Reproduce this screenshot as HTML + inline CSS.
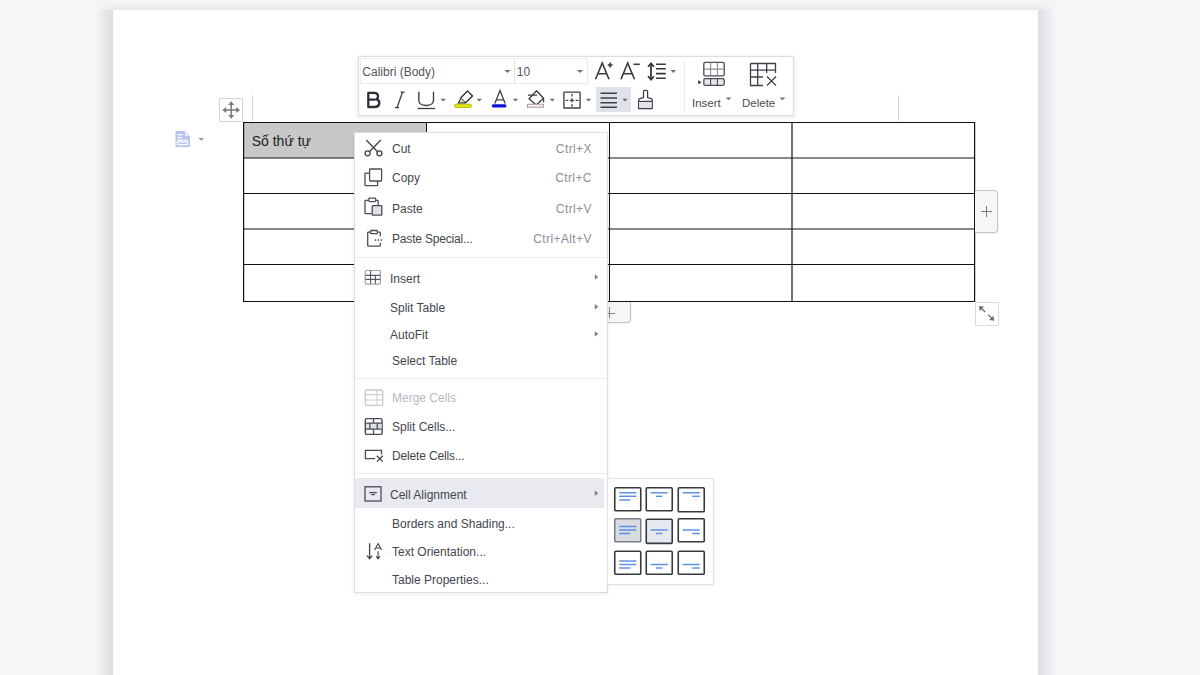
<!DOCTYPE html>
<html><head><meta charset="utf-8">
<style>
html,body{margin:0;padding:0;}
body{width:1200px;height:675px;overflow:hidden;background:#f5f6f8;position:relative;font-family:"Liberation Sans",sans-serif;}
.abs{position:absolute;}
#page{position:absolute;left:113px;top:10px;width:925px;height:700px;background:#fff;}
.t{position:absolute;white-space:nowrap;font-size:12px;line-height:14px;color:#43464d;}
.sc{position:absolute;white-space:nowrap;font-size:12px;line-height:14px;color:#8d9096;text-align:right;letter-spacing:0.4px;}
svg{position:absolute;overflow:visible;}
</style></head><body>
<div class="abs" style="left:1038px;top:10px;width:18px;height:665px;background:linear-gradient(to right,#dcdde0 0,#e1e2e5 3px,#e6e7ea 7px,#ecedf0 12px,#f5f6f8 18px)"></div>
<div class="abs" style="left:95px;top:10px;width:18px;height:665px;background:linear-gradient(to left,#dcdde0 0,#e0e1e3 3px,#e5e6e8 7px,#eaebed 11px,#f0f1f3 15px,#f5f6f8 18px)"></div>
<div class="abs" style="left:95px;top:0;width:961px;height:10px;background:linear-gradient(to top,#e6e7ea 0,#eaebee 2px,#f0f1f3 6px,#f5f6f8 10px);-webkit-mask-image:linear-gradient(to right,transparent 0,#000 18px,#000 943px,transparent 961px)"></div>
<div id="page"></div>

<!-- rulers / markers -->
<div class="abs" style="left:252px;top:95px;width:1px;height:26px;background:#d8d8d8"></div>
<div class="abs" style="left:898px;top:95px;width:1px;height:26px;background:#d8d8d8"></div>

<!-- move handle -->
<div class="abs" style="left:219px;top:98px;width:22px;height:22px;border:1px solid #d6d6d6;background:#fff"></div>
<svg style="left:0;top:0" width="1200" height="675">
 <g stroke="#7a7a7a" stroke-width="1.5" fill="none">
  <path d="M231.2 102.5 V117.5 M223.5 110 H239"/>
 </g>
 <g fill="#7a7a7a">
  <path d="M231.2 101.2 L234.2 105 H228.2Z"/>
  <path d="M231.2 118.8 L234.2 115 H228.2Z"/>
  <path d="M222.4 110 L226.2 107 V113Z"/>
  <path d="M240 110 L236.2 107 V113Z"/>
 </g>
 <!-- doc icon -->
 <path d="M175.5 131 H185 L190 136 V147 H175.5Z" fill="#b9c5ec"/>
 <path d="M185 131 V136 H190Z" fill="#e4e9f8"/>
 <g stroke="#fff" stroke-width="1.1" fill="none">
  <path d="M177.4 134.6 H182.5 M177.4 137.6 H181.5 M177.4 140.4 H183 M183.5 140.4 H188"/>
  <rect x="177.3" y="142" width="10.4" height="2.6"/>
 </g>
 <path d="M198.4 138.1 H204.2 L201.3 140.7Z" fill="#999"/>
</svg>

<!-- table -->
<div class="abs" style="left:243px;top:122px;width:183px;height:36px;background:#c8c8c8"></div>
<div class="t" style="left:251.7px;top:132.7px;font-size:14px;line-height:16px;color:#1e1e1e">Số thứ tự</div>
<svg id="tbl" style="left:0;top:0" width="1200" height="675">
 <g stroke="#111" stroke-width="1.05" fill="none">
  <line x1="243.1" y1="122.5" x2="975.1" y2="122.5"/>
  <line x1="243.1" y1="158" x2="975.1" y2="158" stroke-width="1.2"/>
  <line x1="243.1" y1="193.5" x2="975.1" y2="193.5"/>
  <line x1="243.1" y1="229" x2="975.1" y2="229" stroke-width="1.2"/>
  <line x1="243.1" y1="264.5" x2="975.1" y2="264.5"/>
  <line x1="243.1" y1="301.5" x2="975.1" y2="301.5"/>
  <line x1="243.6" y1="122" x2="243.6" y2="302" stroke-width="1.2"/>
  <line x1="426.5" y1="122" x2="426.5" y2="302"/>
  <line x1="609.5" y1="122" x2="609.5" y2="302"/>
  <line x1="792" y1="122" x2="792" y2="302" stroke-width="1.2"/>
  <line x1="974.6" y1="122" x2="974.6" y2="302" stroke-width="1.2"/>
 </g>
</svg>

<!-- right + tab -->
<div class="abs" style="left:975px;top:190px;width:22px;height:41px;border:1px solid #c4c5c8;border-left:none;border-radius:0 4px 4px 0;background:#f6f6f6;box-shadow:1px 1px 1px rgba(0,0,0,0.05)"></div>
<div class="abs" style="left:981px;top:211px;width:11px;height:1.4px;background:#7d7d7d"></div>
<div class="abs" style="left:985.8px;top:206px;width:1.4px;height:11px;background:#7d7d7d"></div>
<!-- bottom + tab -->
<div class="abs" style="left:589px;top:302px;width:40px;height:20px;border:1px solid #c4c5c8;border-top:none;border-radius:0 0 4px 4px;background:#f6f6f6;box-shadow:1px 1px 1px rgba(0,0,0,0.05)"></div>
<div class="abs" style="left:603.5px;top:312.5px;width:11px;height:1.2px;background:#8a8a8a"></div>
<div class="abs" style="left:608.5px;top:307px;width:1.2px;height:11px;background:#8a8a8a"></div>
<!-- resize handle -->
<div class="abs" style="left:975px;top:301.5px;width:22px;height:22px;border:1px solid #d9d9d9;border-radius:1px;background:#fff"></div>
<svg style="left:0;top:0" width="1200" height="675">
 <!-- resize handle arrows -->
 <g stroke="#6e6e6e" stroke-width="1.3" fill="none">
  <path d="M981 308 L985.2 312"/>
  <path d="M992 318.5 L988 314.6"/>
 </g>
 <g fill="#6e6e6e">
  <path d="M979 306 L984 306.8 L979.8 311Z"/>
  <path d="M994.2 320.8 L989.2 320 L993.4 315.8Z"/>
 </g>
</svg>

<!-- TOOLBAR -->
<div id="tb" class="abs" style="left:358px;top:56px;width:434px;height:58px;border:1px solid #dcdde0;background:#fff;box-shadow:0 1px 4px rgba(0,0,0,0.12)"></div>
<!-- font box -->
<div class="abs" style="left:360px;top:58px;width:226px;height:24px;border:1px solid #ececec"></div>
<div class="abs" style="left:514px;top:58px;width:1px;height:26px;background:#e4e4e4"></div>
<div class="t" style="left:362.3px;top:65px;color:#51555c">Calibri (Body)</div>
<div class="t" style="left:516.8px;top:65px;color:#51555c">10</div>
<div class="abs" style="left:595.8px;top:86.8px;width:35.3px;height:25.6px;background:#dfe3e8;border-radius:1px"></div>
<svg style="left:0;top:0" width="1200" height="675">
 <g fill="#6b6f76">
  <path d="M504.5 70 h6 l-3 3z"/>
  <path d="M577 70 h6 l-3 3z"/>
  <path d="M670.5 70 h5.5 l-2.75 3z"/>
  <path d="M440.5 98.8 h5.5 l-2.75 2.8z"/>
  <path d="M476.5 98.8 h5.5 l-2.75 2.8z"/>
  <path d="M512.8 98.8 h5.5 l-2.75 2.8z"/>
  <path d="M549.5 98.8 h5.5 l-2.75 2.8z"/>
  <path d="M585.7 98.8 h5.5 l-2.75 2.8z"/>
  <path d="M622.3 98.8 h5.5 l-2.75 2.8z"/>
  <path d="M725.7 97.5 h5.5 l-2.75 2.8z"/>
  <path d="M779.7 97.5 h5.5 l-2.75 2.8z"/>
 </g>
 <!-- A+ A- -->
 <g stroke="#353840" stroke-width="1.6" fill="none">
  <path d="M595.5 79.3 L602.2 63 L609 79.3 M597.8 73.8 H606.6"/>
  <path d="M607.8 65 H612.6 M610.2 62.6 V67.4"/>
  <path d="M621 79.3 L627.7 63 L634.5 79.3 M623.3 73.8 H632.1"/>
  <path d="M633.5 64.3 H639.8"/>
  <!-- line spacing -->
  <path d="M651 64 V79" stroke-width="1.8"/>
  <path d="M648 66.8 L651 63.4 L654 66.8 M648 76.2 L651 79.6 L654 76.2" stroke-width="1.7"/>
  <path d="M656 64.2 H665.8 M656 68.8 H665.8 M656 73.6 H665.8 M656 78.3 H665.8"/>
 </g>
 <line x1="684.5" y1="60" x2="684.5" y2="112" stroke="#ececec" stroke-width="1"/>
 <!-- B I U -->
 <path d="M368.3 92.8 H374.2 C378.4 92.8 379.2 96.8 376.6 99.4 C380.3 100.2 380.6 107 374.5 107 H368.3 Z M368.3 99.6 H375.5" stroke="#2e3138" stroke-width="2.3" fill="none" stroke-linejoin="round"/>
 <path d="M397 107.8 L402.6 92 M395 107.6 H399 M400.6 92.2 H404.6" stroke="#3d4047" stroke-width="1.3" fill="none"/>
 <path d="M418.8 91.8 V100.2 C418.8 107.2 433.5 107.2 433.5 100.2 V91.8" stroke="#3d4047" stroke-width="1.4" fill="none"/>
 <line x1="417.5" y1="108.5" x2="435" y2="108.5" stroke="#3d4047" stroke-width="1.3"/>
 <!-- highlight -->
 <path d="M467.5 91 L472.5 96 L465.4 103 L460.6 98 Z" stroke="#2f3238" stroke-width="1.4" fill="#fff" stroke-linejoin="round"/>
 <path d="M460.8 98.3 L458.4 103 L465 102.8" stroke="#2f3238" stroke-width="1.2" fill="#d8e8d0"/>
 <rect x="454.5" y="104.2" width="17" height="3.2" rx="1.6" fill="#eaea00" stroke="#b0b010" stroke-width="0.9"/>
 <!-- font color -->
 <path d="M494.8 103.5 L500 90.5 L505.2 103.5 M496.4 99.8 H503.6" stroke="#3d4047" stroke-width="1.3" fill="none"/>
 <rect x="491.8" y="104.3" width="14.6" height="3.2" rx="1.5" fill="#1010d8"/>
 <!-- shading -->
 <path d="M536.5 90.8 L543.5 98.3 L536.2 105 L529 98.8 Z" stroke="#3d4047" stroke-width="1.4" fill="#fff" stroke-linejoin="round"/>
 <path d="M528 95.2 H537 M543.6 98.5 V102.3" stroke="#3d4047" stroke-width="1.3" fill="none"/>
 <rect x="527.5" y="104.2" width="16" height="3" fill="#fbeef0" stroke="#9c9090" stroke-width="0.9"/>
 <!-- borders -->
 <rect x="563.9" y="92.1" width="16.2" height="15.9" stroke="#3d4047" stroke-width="1.35" fill="#fff" rx="0.3"/>
 <path d="M565.6 100.4 H568.2 M569.6 100.4 H574.2 M575.6 100.4 H578.6 M571.9 94 V96.6 M571.9 98.2 V102.6 M571.9 104.2 V106.8" stroke="#4a4d54" stroke-width="1.4" fill="none"/>
 <!-- align -->
 <path d="M600.5 93.3 H617 M600.5 98 H617 M600.5 102.7 H617 M600.5 107.2 H617" stroke="#3d4047" stroke-width="1.5" fill="none"/>
 <!-- format painter -->
 <path d="M643.5 97.6 V91.3 Q643.5 90.3 644.5 90.3 H646.6 Q647.6 90.3 647.6 91.3 V97.6 L651 98.6 Q652.2 99 652.2 100.2 V108.5 H638.6 V100.2 Q638.6 99 639.8 98.6 Z" stroke="#3d4047" stroke-width="1.3" fill="#fff" stroke-linejoin="round"/>
 <rect x="639.3" y="101.6" width="12.2" height="6.3" fill="#e4e5e8"/>
 <line x1="638.6" y1="101.4" x2="652.2" y2="101.4" stroke="#3d4047" stroke-width="1.2"/>
 <!-- insert table icon -->
 <rect x="703.8" y="62.3" width="20.4" height="13.6" rx="1.5" stroke="#4a4d54" stroke-width="1.3" fill="#fff"/>
 <path d="M710.6 62.5 V75.8 M717.4 62.5 V75.8 M704 69.1 H724" stroke="#8a8d93" stroke-width="1.1" fill="none"/>
 <rect x="703.8" y="78.6" width="20.4" height="6.8" rx="1.5" stroke="#4a4d54" stroke-width="1.3" fill="#e6e7ea"/>
 <path d="M710.6 78.8 V85.2 M717.4 78.8 V85.2" stroke="#4a4d54" stroke-width="1.1"/>
 <path d="M698.2 80.2 L701.6 82.2 L698.2 84.2 Z" fill="#2e3138"/>
 <!-- delete table icon -->
 <path d="M750.5 63.5 H775.5 V73 M750.5 63.5 V85.5 H763 M750.5 70.2 H775.5 M750.5 77 H763 M757.7 63.5 V85.5 M766.7 63.5 V73" stroke="#3d4047" stroke-width="1.3" fill="none"/>
 <path d="M767 76.5 L776 85.5 M776 76.5 L767 85.5" stroke="#3d4047" stroke-width="1.3"/>
</svg>
<div class="t" style="left:692px;top:96px;font-size:11.5px;color:#4a4e55">Insert</div>
<div class="t" style="left:742px;top:96px;font-size:11.5px;color:#4a4e55">Delete</div>

<!-- CONTEXT MENU -->
<div id="menu" class="abs" style="left:354px;top:132px;width:252px;height:459px;border:1px solid #dcdde1;background:#fff;box-shadow:0 1px 4px rgba(0,0,0,0.07)"></div>
<div class="abs" style="left:355px;top:477.8px;width:249px;height:29.8px;background:#e8eaef"></div>
<div class="abs" style="left:355px;top:256.5px;width:252px;height:1px;background:#ebecee"></div>
<div class="abs" style="left:355px;top:377.5px;width:252px;height:1px;background:#ebecee"></div>
<div class="abs" style="left:355px;top:472.5px;width:252px;height:1px;background:#ebecee"></div>
<div class="t" style="left:392px;top:142px;color:#43464d">Cut</div>
<div class="sc" style="right:608.1px;top:142px">Ctrl+X</div>
<div class="t" style="left:392px;top:171px;color:#43464d">Copy</div>
<div class="sc" style="right:608.1px;top:171px">Ctrl+C</div>
<div class="t" style="left:392px;top:202px;color:#43464d">Paste</div>
<div class="sc" style="right:608.1px;top:202px">Ctrl+V</div>
<div class="t" style="left:392px;top:232px;color:#43464d;letter-spacing:-0.18px">Paste Special...</div>
<div class="sc" style="right:608.1px;top:232px">Ctrl+Alt+V</div>
<div class="t" style="left:390px;top:272px;color:#43464d">Insert</div>
<div class="t" style="left:390px;top:301px;color:#43464d">Split Table</div>
<div class="t" style="left:390px;top:328px;color:#43464d">AutoFit</div>
<div class="t" style="left:392px;top:354px;color:#43464d">Select Table</div>
<div class="t" style="left:392px;top:391px;color:#b6b9be">Merge Cells</div>
<div class="t" style="left:392px;top:420px;color:#43464d">Split Cells...</div>
<div class="t" style="left:392px;top:449px;color:#43464d;letter-spacing:-0.15px">Delete Cells...</div>
<div class="t" style="left:390px;top:488px;color:#43464d">Cell Alignment</div>
<div class="t" style="left:392px;top:517px;color:#43464d">Borders and Shading...</div>
<div class="t" style="left:392px;top:545px;color:#43464d">Text Orientation...</div>
<div class="t" style="left:392px;top:573px;color:#43464d">Table Properties...</div>
<svg style="left:0;top:0" width="1200" height="675">
 <g fill="#7b7f86">
  <path d="M594.8 274.3 L598.3 277 L594.8 279.7Z"/>
  <path d="M594.8 304 L598.3 306.7 L594.8 309.4Z"/>
  <path d="M594.8 331.2 L598.3 333.9 L594.8 336.6Z"/>
  <path d="M594.8 490.5 L598.3 493.2 L594.8 495.9Z"/>
 </g>
 <!-- cut -->
 <g stroke="#3d4047" stroke-width="1.3" fill="none">
  <path d="M366.2 140 L377.6 151.7 M380.8 140 L369.4 151.7"/>
  <circle cx="367.6" cy="153.3" r="2.5"/>
  <circle cx="379.4" cy="153.3" r="2.5"/>
 </g>
 <!-- copy -->
 <g stroke="#4a4d54" stroke-width="1.3" fill="none">
  <rect x="369.6" y="169" width="12" height="12" rx="0.8" fill="#fff"/>
  <path d="M369.6 173.2 H365.6 Q365 173.2 365 173.8 V185 Q365 185.6 365.6 185.6 H377 Q377.6 185.6 377.6 185 V181"/>
 </g>
 <!-- paste -->
 <g stroke="#4a4d54" stroke-width="1.3" fill="none">
  <path d="M368.7 200.3 H365.6 Q365 200.3 365 200.9 V213 Q365 213.6 365.6 213.6 H371.8 M375.9 200.3 H377.6 Q378.2 200.3 378.2 200.9 V205.2"/>
  <rect x="368.9" y="198.2" width="6.8" height="3.4" rx="0.8" fill="#fff"/>
  <rect x="372.2" y="205.6" width="9.6" height="9.6" rx="0.6" fill="#e1e2e5"/>
 </g>
 <!-- paste special -->
 <g stroke="#4a4d54" stroke-width="1.3" fill="none">
  <path d="M370 232.2 H368.3 Q367.7 232.2 367.7 232.8 V245.6 Q367.7 246.2 368.3 246.2 H379.7 Q380.3 246.2 380.3 245.6 V242.8 M378.2 232.2 H379.7 Q380.3 232.2 380.3 232.8 V236.2"/>
  <rect x="370.6" y="230.5" width="6.8" height="3.2" rx="0.8" fill="#fff"/>
 </g>
 <g fill="#4a4d54"><rect x="374.6" y="239.3" width="1.5" height="1.5"/><rect x="377.6" y="239.3" width="1.5" height="1.5"/><rect x="380.6" y="239.3" width="1.5" height="1.5"/></g>
 <!-- insert table -->
 <rect x="365.2" y="270.5" width="15.2" height="13.6" rx="1.2" stroke="#9fa2a7" stroke-width="1.2" fill="none"/>
 <path d="M370.6 270.8 V283.8 M375.4 275.4 V283.8 M365.4 275.4 H380.2 M365.4 279.4 H380.2" stroke="#55585e" stroke-width="1.1" fill="none"/>
 <!-- merge cells (disabled) -->
 <rect x="365.3" y="390" width="17.4" height="15.4" rx="1.5" stroke="#c6c8cc" stroke-width="1.3" fill="none"/>
 <path d="M365.5 394.6 H382.5 M365.5 400 H382.5 M377 390.2 V405.2" stroke="#cdd0d3" stroke-width="1.1" fill="none"/>
 <!-- split cells -->
 <rect x="365.3" y="418.6" width="16.8" height="15.8" rx="1.5" stroke="#4a4d54" stroke-width="1.4" fill="#fff"/>
 <rect x="366" y="423.2" width="15.6" height="6" fill="#dfe2e8"/>
 <path d="M365.5 423.2 H382 M365.5 429.2 H382 M373.5 418.8 V423.2 M369.9 423.2 V429.2 M377.3 423.2 V429.2 M373.5 429.2 V434.4" stroke="#4a4d54" stroke-width="1.3" fill="none"/>
 <!-- delete cells -->
 <path d="M375 458.6 H365.4 V450.3 H381.5 V454.5" stroke="#4a4d54" stroke-width="1.3" fill="none"/>
 <path d="M376.8 455.8 L382.8 461.6 M382.8 455.8 L376.8 461.6" stroke="#3d4047" stroke-width="1.3" fill="none"/>
 <!-- cell alignment -->
 <rect x="365" y="486.8" width="16" height="14.2" stroke="#4a4d54" stroke-width="1.3" fill="none"/>
 <path d="M369.2 492.6 H376.8" stroke="#4a4d54" stroke-width="1.3"/>
 <path d="M371.2 494.6 H374.8" stroke="#4a4d54" stroke-width="1.2"/>
 <!-- text orientation -->
 <path d="M369.6 543.2 V558.6 M367 555.6 L369.6 558.8 L372.2 555.6" stroke="#3d4047" stroke-width="1.3" fill="none"/>
 <path d="M374.6 550 L378.1 543.6 L381.6 550 M375.7 548 H380.5" stroke="#3d4047" stroke-width="1.1" fill="none"/>
 <path d="M378.1 551.2 V558.6 M376.2 556.4 L378.1 558.8 L380 556.4" stroke="#3d4047" stroke-width="1.1" fill="none"/>
</svg>

<!-- SUBMENU -->
<div id="sub" class="abs" style="left:607px;top:478px;width:105px;height:105px;border:1px solid #e2e3e6;background:#fff;box-shadow:0 1px 3px rgba(0,0,0,0.05)"></div>
<svg style="left:0;top:0" width="1200" height="675">
 <rect x="614.75" y="487.75" width="26" height="23" rx="1.1" stroke="#363940" stroke-width="1.6" fill="#fff"/>
 <line x1="619.2" y1="492.8" x2="636.4" y2="492.8" stroke="#5a8ee6" stroke-width="1.45"/>
 <line x1="619.2" y1="496.3" x2="636.4" y2="496.3" stroke="#5a8ee6" stroke-width="1.45"/>
 <line x1="619.2" y1="500.0" x2="630.2" y2="500.0" stroke="#5a8ee6" stroke-width="1.45"/>
 <rect x="646.25" y="487.75" width="26" height="23" rx="1.1" stroke="#363940" stroke-width="1.6" fill="#fff"/>
 <line x1="650.7" y1="492.8" x2="667.7" y2="492.8" stroke="#5a8ee6" stroke-width="1.45"/>
 <line x1="656.0" y1="496.3" x2="662.3" y2="496.3" stroke="#5a8ee6" stroke-width="1.45"/>
 <rect x="678.25" y="487.75" width="26" height="24" rx="1.1" stroke="#363940" stroke-width="1.6" fill="#fff"/>
 <line x1="682.7" y1="492.8" x2="699.7" y2="492.8" stroke="#5a8ee6" stroke-width="1.45"/>
 <line x1="692.3" y1="496.3" x2="699.7" y2="496.3" stroke="#5a8ee6" stroke-width="1.45"/>
 <rect x="614.75" y="518.75" width="26" height="23" rx="1.1" stroke="#7a7d83" stroke-width="1.5" fill="#d8dbe0"/>
 <line x1="619.2" y1="526.5" x2="636.4" y2="526.5" stroke="#5a8ee6" stroke-width="1.45"/>
 <line x1="619.2" y1="530" x2="636.4" y2="530" stroke="#5a8ee6" stroke-width="1.45"/>
 <line x1="619.2" y1="533.5" x2="630.2" y2="533.5" stroke="#5a8ee6" stroke-width="1.45"/>
 <rect x="646.25" y="519.2" width="26" height="24.2" rx="1.1" stroke="#363940" stroke-width="1.6" fill="#e6e9ee"/>
 <line x1="650.7" y1="530" x2="667.7" y2="530" stroke="#5a8ee6" stroke-width="1.45"/>
 <line x1="656.0" y1="533.5" x2="662.3" y2="533.5" stroke="#5a8ee6" stroke-width="1.45"/>
 <rect x="678.25" y="518.75" width="26" height="23" rx="1.1" stroke="#363940" stroke-width="1.6" fill="#fff"/>
 <line x1="682.7" y1="530" x2="699.7" y2="530" stroke="#5a8ee6" stroke-width="1.45"/>
 <line x1="692.3" y1="533.5" x2="699.7" y2="533.5" stroke="#5a8ee6" stroke-width="1.45"/>
 <rect x="614.75" y="551.25" width="26" height="23" rx="1.1" stroke="#363940" stroke-width="1.6" fill="#fff"/>
 <line x1="619.2" y1="561.0" x2="636.4" y2="561.0" stroke="#5a8ee6" stroke-width="1.45"/>
 <line x1="619.2" y1="564.5" x2="636.4" y2="564.5" stroke="#5a8ee6" stroke-width="1.45"/>
 <line x1="619.2" y1="568.0" x2="630.2" y2="568.0" stroke="#5a8ee6" stroke-width="1.45"/>
 <rect x="646.25" y="551.25" width="26" height="23" rx="1.1" stroke="#363940" stroke-width="1.6" fill="#fff"/>
 <line x1="650.7" y1="564.5" x2="667.7" y2="564.5" stroke="#5a8ee6" stroke-width="1.45"/>
 <line x1="656.0" y1="568.0" x2="662.3" y2="568.0" stroke="#5a8ee6" stroke-width="1.45"/>
 <rect x="678.25" y="551.25" width="26" height="23" rx="1.1" stroke="#363940" stroke-width="1.6" fill="#fff"/>
 <line x1="682.7" y1="564.5" x2="699.7" y2="564.5" stroke="#5a8ee6" stroke-width="1.45"/>
 <line x1="692.3" y1="568.0" x2="699.7" y2="568.0" stroke="#5a8ee6" stroke-width="1.45"/>
</svg>

</body></html>
